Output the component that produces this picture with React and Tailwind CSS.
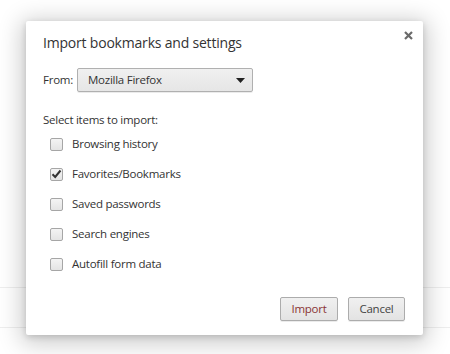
import React from "react";

const items = [
  { label: "Browsing history", checked: false },
  { label: "Favorites/Bookmarks", checked: true },
  { label: "Saved passwords", checked: false },
  { label: "Search engines", checked: false },
  { label: "Autofill form data", checked: false },
];

function Checkbox({ checked }) {
  return (
    <span className="w-[13px] h-[13px] rounded-[2px] border border-[#a6a6a6] bg-gradient-to-b from-[#f4f4f4] to-[#e4e4e4] flex items-center justify-center shrink-0">
      {checked && (
        <svg width="11" height="10" viewBox="0 0 11 10">
          <path d="M1.5 5.2 L4.2 8 L9.5 1.5" fill="none" stroke="#333" strokeWidth="2" />
        </svg>
      )}
    </span>
  );
}

function Button({ children, className = "" }) {
  return (
    <button className={`h-[24px] rounded-[2px] border border-[#acacac] bg-gradient-to-b from-[#f0f0f0] to-[#e3e3e3] shadow-[0_1px_0_rgba(0,0,0,0.08)] text-[11.5px] tracking-[-0.25px] ${className}`}>
      {children}
    </button>
  );
}

export default function App() {
  return (
    <div className="relative w-[450px] h-[354px] bg-white overflow-hidden font-['Open_Sans',sans-serif] text-[#333]">
      <div className="h-[288px] border-b border-[#eeeeee]" />
      <div className="h-[40px] border-b border-[#eeeeee]" />

      <div className="absolute left-[26px] top-[21px] w-[397px] h-[314px] bg-white rounded-[2px] shadow-[0_4px_23px_5px_rgba(0,0,0,0.2),0_2px_6px_rgba(0,0,0,0.15)] px-[17px] pt-[12px] flex flex-col">
        <button className="absolute right-[10px] top-[9px] w-[10px] h-[10px] flex items-center justify-center">
          <svg width="9" height="9" viewBox="0 0 9 9">
            <path d="M1 1 L8 8 M8 1 L1 8" stroke="#6a6a6a" strokeWidth="2.2" />
          </svg>
        </button>

        <div className="text-[14px] leading-[20px] tracking-[-0.2px] text-[#333]">Import bookmarks and settings</div>

        <div className="mt-[15px] flex items-center gap-[4px] text-[11.5px] tracking-[-0.25px]">
          <span>From:</span>
          <div className="w-[176px] h-[24px] rounded-[2px] border border-[#b0b0b0] bg-gradient-to-b from-[#f0f0f0] to-[#e6e6e6] shadow-[0_1px_0_rgba(0,0,0,0.08)] flex items-center justify-between pl-[10px] pr-[7px]">
            <span>Mozilla Firefox</span>
            <svg width="9" height="5" viewBox="0 0 9 5">
              <path d="M0 0 L9 0 L4.5 5 Z" fill="#222" />
            </svg>
          </div>
        </div>

        <div className="mt-[20px] text-[11.5px] leading-[16px] tracking-[-0.25px]">Select items to import:</div>

        <div className="mt-[1px] flex flex-col">
          {items.map((it) => (
            <div key={it.label} className="h-[30px] flex items-center pl-[7px] gap-[9px] text-[11.5px] tracking-[-0.25px]">
              <Checkbox checked={it.checked} />
              <span>{it.label}</span>
            </div>
          ))}
        </div>

        <div className="mt-[18px] flex justify-end gap-[10px] pr-[1px]">
          <Button className="w-[58px] text-[#8a3535]">Import</Button>
          <Button className="w-[57px] text-[#444]">Cancel</Button>
        </div>
      </div>
    </div>
  );
}
